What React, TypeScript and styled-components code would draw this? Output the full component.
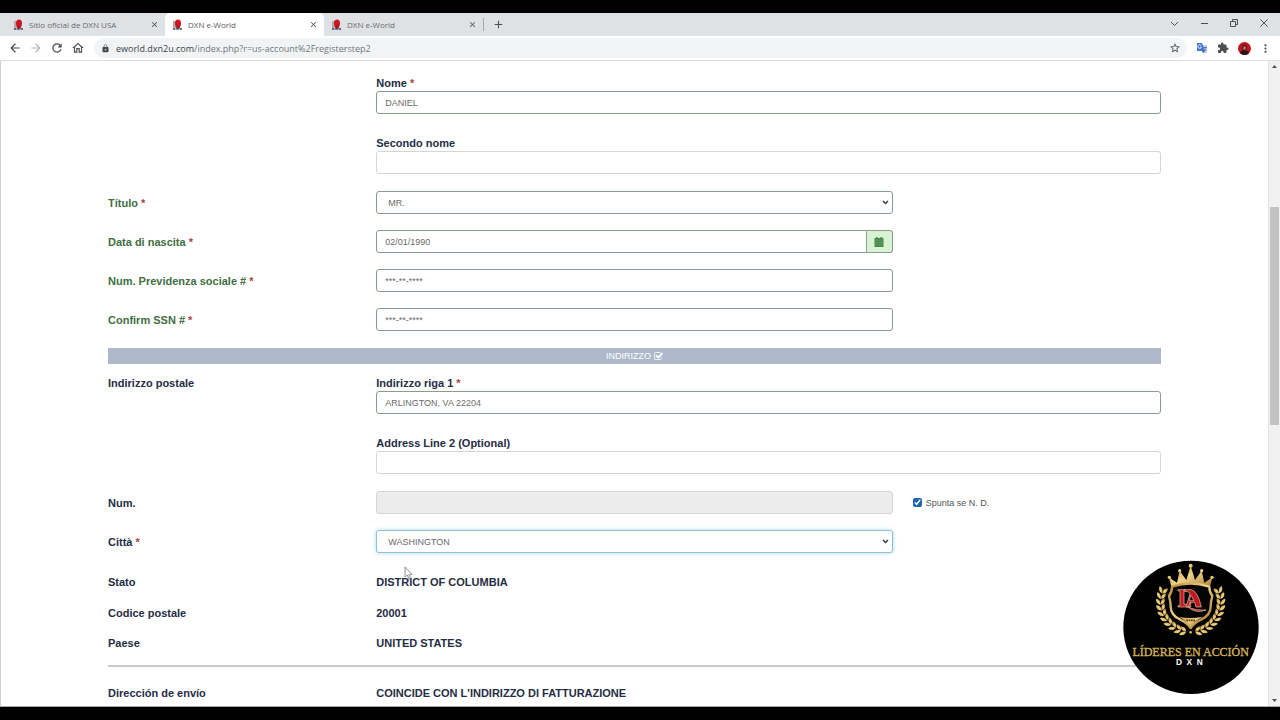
import React from "react";
import styled, { createGlobalStyle, css } from "styled-components";
import {
  MdArrowBack,
  MdArrowForward,
  MdRefresh,
  MdOutlineHome,
  MdLock,
  MdStarOutline,
  MdExtension,
  MdMoreVert,
  MdClose,
  MdAdd,
} from "react-icons/md";

const Global = createGlobalStyle`
  *, *::before, *::after { box-sizing: border-box; }
  body { margin: 0; background: #000; }
  button, input, select { font-family: inherit; }
`;

const sans = `"Liberation Sans", Arial, sans-serif`;
const chromeFont = `"Open Sans", "Noto Sans", sans-serif`;

const Screen = styled.div`
  position: relative;
  height: 100vh;
  display: flex;
  flex-direction: column;
  padding: 13px 0;
  background: #000;
  font-family: ${sans};
  overflow: hidden;
`;

/* ---------- browser chrome ---------- */

const TabStrip = styled.div`
  display: flex;
  align-items: stretch;
  flex: none;
  height: 23px;
  padding-left: 6px;
  background: #dee2e5;
  font-family: ${chromeFont};
`;

const Tab = styled.div<{ $active?: boolean }>`
  display: flex;
  align-items: center;
  gap: 5px;
  flex: 0 1 159px;
  padding: 0 6px 0 7px;
  border-radius: 5px 5px 0 0;
  color: ${(p) => (p.$active ? "#55595d" : "#666a6e")};
  background: ${(p) => (p.$active ? "#fff" : "transparent")};
  font-size: 8px;
`;

const TabTitle = styled.span`
  flex: 1;
  white-space: nowrap;
  overflow: hidden;
`;

const IconButton = styled.button<{ $size?: number; $faded?: boolean }>`
  display: flex;
  align-items: center;
  justify-content: center;
  flex: none;
  width: ${(p) => p.$size ?? 14}px;
  height: ${(p) => p.$size ?? 14}px;
  padding: 0;
  border: 0;
  background: none;
  color: ${(p) => (p.$faded ? "#b4b7ba" : "#4c5054")};
`;

const NewTab = styled.div`
  display: flex;
  align-items: center;
  margin: 5px 0;
  padding-left: 7px;
  border-left: 1px solid #a4a8ac;
`;

const WindowControls = styled.div`
  display: flex;
  align-items: center;
  gap: 16px;
  margin-left: auto;
  padding: 0 9px 3px 0;
`;

const Toolbar = styled.div`
  display: flex;
  align-items: center;
  flex: none;
  height: 25px;
  padding: 0 8px;
  border-bottom: 1px solid #dcdee0;
  background: #fff;
`;

const NavButtons = styled.div`
  display: flex;
  gap: 7px;
  margin-right: 9px;
`;

const AddressBar = styled.div`
  display: flex;
  align-items: center;
  gap: 6px;
  flex: 1;
  height: 20px;
  padding: 0 5px 0 7px;
  border-radius: 10px;
  background: #f1f4f5;
  color: #44484c;
`;

const Url = styled.span`
  flex: 1;
  font: 9px ${chromeFont};
  color: #3c4043;
  white-space: nowrap;
  em {
    font-style: normal;
    color: #73777b;
  }
`;

const Actions = styled.div`
  display: flex;
  align-items: center;
  gap: 7px;
  margin-left: 8px;
`;

/* ---------- page ---------- */

const Viewport = styled.div`
  display: flex;
  flex: 1;
  min-height: 0;
  border-left: 1px solid #cfd1d3;
  border-bottom: 1px solid #a8a8a8;
  background: #fff;
`;

const Page = styled.main`
  flex: 1;
  min-width: 0;
  overflow: hidden;
  padding: 14px 107px 0;
`;

const ScrollTrack = styled.div`
  display: flex;
  flex-direction: column;
  align-items: center;
  justify-content: space-between;
  position: relative;
  flex: none;
  width: 12px;
  padding: 4px 0;
  border-left: 1px solid #e4e4e4;
  background: #f1f1f1;
`;

const ScrollThumb = styled.div`
  position: absolute;
  top: 22.6%;
  left: 1px;
  right: 1px;
  height: 33.8%;
  background: #c3c3c3;
`;

const Row = styled.div<{ $after?: number }>`
  display: grid;
  grid-template-columns: repeat(12, minmax(0, 1fr));
  column-gap: 20px;
  align-items: center;
  margin-bottom: ${(p) => p.$after ?? 16}px;
`;

const labelText = css<{ $valid?: boolean }>`
  font-size: 11px;
  font-weight: 700;
  line-height: 16px;
  color: ${(p) => (p.$valid ? "#3f6f42" : "#252d45")};
`;

const RowLabel = styled.label<{ $valid?: boolean; $top?: boolean }>`
  ${labelText}
  grid-column: span 3;
  align-self: ${(p) => (p.$top ? "start" : "center")};
`;

const RowTitle = styled.span<{ $top?: boolean }>`
  ${labelText}
  grid-column: span 3;
  align-self: ${(p) => (p.$top ? "start" : "center")};
`;

const Value = styled.span`
  ${labelText}
  grid-column: span 9;
`;

const Star = styled.span`
  color: #a94442;
`;

const Wide = styled.div`
  grid-column: 4 / span 9;
  display: flex;
  flex-direction: column;
  gap: 21px;
`;

const Half = styled.div`
  grid-column: 4 / span 6;
  display: flex;
`;

const Field = styled.div`
  display: flex;
  flex-direction: column;
`;

const FieldLabel = styled.label`
  ${labelText}
`;

type Tone = "plain" | "valid" | "focus";
const borders: Record<Tone, string> = {
  plain: "#d4d6d4",
  valid: "#8b9c8b",
  focus: "#8fc0cf",
};

const control = css<{ $tone?: Tone }>`
  flex: 1;
  width: 100%;
  min-width: 0;
  height: 23px;
  min-height: 23px;
  border: 1px solid ${(p) => borders[p.$tone ?? "plain"]};
  border-radius: 3px;
  background-color: #fff;
  color: #6a6a6a;
  font-size: 9px;
  outline: 0;
  box-shadow: ${(p) => (p.$tone === "focus" ? "0 0 4px #a9dcea" : "none")};
`;

const TextInput = styled.input<{ $tone?: Tone; $joined?: boolean }>`
  ${control}
  padding: 0 8px;
  ${(p) => p.$joined && "border-radius: 3px 0 0 3px;"}
  &:disabled {
    background-color: #ececec;
  }
`;

const SelectWrap = styled.div`
  position: relative;
  display: flex;
  flex: 1;
  svg {
    position: absolute;
    right: 4px;
    top: 8px;
    pointer-events: none;
  }
`;

const SelectBox = styled.select<{ $tone?: Tone }>`
  ${control}
  appearance: none;
  padding: 0 16px 0 11px;
`;

const DateButton = styled.button`
  display: flex;
  align-items: center;
  justify-content: center;
  flex: none;
  width: 26px;
  height: 23px;
  padding: 0;
  border: 1px solid #8b9c8b;
  border-left: 0;
  border-radius: 0 3px 3px 0;
  background: #d8f2d4;
`;

const Band = styled.h2`
  display: flex;
  align-items: center;
  justify-content: center;
  gap: 3px;
  height: 16px;
  margin: 17px 0 11px;
  background: #adb8ca;
  color: #fff;
  font-size: 9px;
  font-weight: 400;
`;

const CheckLabel = styled.label`
  grid-column: span 3;
  display: flex;
  align-items: center;
  gap: 4px;
  font-size: 9px;
  color: #555;
  input {
    width: 9px;
    height: 9px;
    margin: 0;
    accent-color: #1a66b8;
  }
`;

const Rule = styled.hr`
  height: 2px;
  margin: 0 0 18px;
  border: 0;
  background: #c9c9c9;
`;

const Watermark = styled.div`
  position: absolute;
  right: 21px;
  bottom: 25px;
  width: 136px;
  svg {
    display: block;
    width: 100%;
  }
`;

const Pointer = styled.svg`
  position: absolute;
  left: 404px;
  top: 566px;
`;

/* ---------- drawings ---------- */

const Favicon = () => (
  <svg width="11" height="12" viewBox="0 0 11 12" aria-hidden="true">
    <path d="M1 2h3v7H1z" fill="#b9a5a5" />
    <ellipse cx="6" cy="4.5" rx="3" ry="4" fill="#cf1420" />
    <path d="M4.5 7.5h3l.5 2H4z" fill="#7b1821" />
    <path d="M1 10h2.4M4.3 10h2.4M7.6 10H10" stroke="#3d3f5c" strokeWidth="1.6" />
  </svg>
);

const Translate = () => (
  <svg width="12" height="12" viewBox="0 0 12 12" aria-hidden="true">
    <path d="M5 3h6v8H7z" fill="#cfd6e2" />
    <path d="M1 1h5l3 8H1z" fill="#3f78d8" />
    <path d="M5.2 3.6a1.8 1.8 0 1 0 .2 1.6H3.9" stroke="#fff" strokeWidth=".8" fill="none" />
    <path d="M7 5.5h4M9 4.5v1M10.3 5.5C10 7.500 8.500 8.500 7.500 9M8 6.500l2.500 2.500" stroke="#4169b0" strokeWidth=".8" fill="none" />
    <path d="M6 9h3l-2 2z" fill="#2a56a8" />
  </svg>
);

const Avatar = () => (
  <svg width="13" height="13" viewBox="0 0 13 13" aria-hidden="true">
    <circle cx="6.500" cy="6.500" r="6.500" fill="#c4121c" />
    <path d="M2 11.200q1-3.200 4.500-3.200t4.500 3.200a6.500 6.500 0 0 1-9 0z" fill="#2a1216" />
    <ellipse cx="6.500" cy="5.500" rx="2.200" ry="3" fill="#3b1a18" />
    <ellipse cx="6.500" cy="6" rx="1.400" ry="2" fill="#b5705a" />
  </svg>
);

const CalendarIcon = () => (
  <svg width="10" height="10" viewBox="0 0 10 10" aria-hidden="true">
    <path d="M.5 1H2V0h1.500v1h3V0H8v1h1.500v9H.5z" fill="#4b8a4e" />
    <path d="M.5 3.200h9M.5 5.500h9M.5 7.700h9" stroke="#74a974" strokeWidth=".5" />
  </svg>
);

const Chevron = () => (
  <svg width="7" height="7" viewBox="0 0 7 7" aria-hidden="true">
    <path d="M1 2l2.500 2.500L6 2" fill="none" stroke="#3c3c3c" strokeWidth="1.500" />
  </svg>
);

const CheckSquare = () => (
  <svg width="9" height="9" viewBox="0 0 1664 1536" fill="#fff" aria-hidden="true">
    <path d="M1408 802v318q0 119-84.500 203.500t-203.500 84.500h-832q-119 0-203.500-84.500t-84.500-203.500v-832q0-119 84.500-203.500t203.500-84.500h832q63 0 117 25 15 7 18 23 3 17-9 29l-49 49q-10 10-23 10-3 0-9-2-23-6-45-6h-832q-66 0-113 47t-47 113v832q0 66 47 113t113 47h832q66 0 113-47t47-113v-254q0-13 9-22l64-64q10-10 23-10 6 0 12 3 20 8 20 29zm231-489l-814 814q-24 24-57 24t-57-24l-430-430q-24-24-24-57t24-57l110-110q24-24 57-24t57 24l263 263 647-647q24-24 57-24t57 24l110 110q24 24 24 57t-24 57z" />
  </svg>
);

const Triangle = ({ down }: { down?: boolean }) => (
  <svg width="5" height="3" viewBox="0 0 5 3" aria-hidden="true">
    <path d={down ? "M0 0h5L2.500 3z" : "M0 3h5L2.500 0z"} fill="#505050" />
  </svg>
);

const leafAngles = [198, 187, 176, 165, 154, 143, 132, 121, 110, 100];

const Laurel = () => (
  <g fill="url(#gold)">
    {leafAngles.map((deg) => {
      const a = (deg * Math.PI) / 180;
      const x = 241 + 90 * Math.cos(a);
      const y = 156 + 90 * Math.sin(a);
      return (
        <g key={deg} transform={`translate(${x.toFixed(1)} ${y.toFixed(1)}) rotate(${deg + 90})`}>
          <path d="M-2 0q3-15 19-13-2 13-19 13z" />
          <path d="M-2 0q3 15 19 13-2-13-19-13z" />
        </g>
      );
    })}
  </g>
);

const Emblem = () => (
  <svg viewBox="38 30 408 404" role="img" aria-label="Líderes en Acción DXN">
    <defs>
      <linearGradient id="gold" x1="0" y1="0" x2="1" y2="1">
        <stop offset="0" stopColor="#b98a35" />
        <stop offset=".45" stopColor="#ecd185" />
        <stop offset="1" stopColor="#a5742a" />
      </linearGradient>
    </defs>
    <ellipse cx="242" cy="232" rx="203" ry="200" fill="#000" />
    <Laurel />
    <g transform="translate(482 0) scale(-1 1)">
      <Laurel />
    </g>
    <path
      d="M176 82l24 16 8-36 20 28 13-43 13 43 20-28 8 36 24-16-9 36q-56-22-112 0z"
      fill="url(#gold)"
    />
    <g fill="#e9c978">
      <circle cx="241" cy="47" r="6" />
      <circle cx="208" cy="62" r="5" />
      <circle cx="274" cy="62" r="5" />
      <circle cx="177" cy="82" r="5" />
      <circle cx="305" cy="82" r="5" />
    </g>
    <path
      d="M185 110q56-18 112 0 0 16 9 28-5 18-5 32 0 24-27 38-24 12-33 26-9-14-33-26-27-14-27-38 0-14-5-32 9-12 9-28z"
      fill="#050505"
      stroke="url(#gold)"
      strokeWidth="7"
      strokeLinejoin="round"
    />
    <path d="M206 200q35 8 70 0-24 14-35 30-11-16-35-30z" fill="url(#gold)" />
    <path d="M228 211h26" stroke="#50370f" strokeWidth="5" strokeDasharray="5 2" />
    <g fill="#c41624" stroke="#e8c9a0" strokeWidth="2">
      <path d="M203 119h24v4h-6v40h14l6-8v16h-38v-4h6v-44h-6z" />
      <path d="M221 119h22q20 6 30 52h-16l-4-14h-14l-4 14h-8l12-40q-4-8-18-8zM241 136l-4 16h13q-3-12-9-16z" />
      <path d="M232 170q22 12 55 10-32 12-55-10z" />
    </g>
    <circle cx="241" cy="247" r="4" fill="#d6b05c" />
    <text
      x="241"
      y="317"
      textAnchor="middle"
      fill="#d9b557"
      stroke="#d9b557"
      fontFamily="Liberation Serif, serif"
      fontSize="36"
    >
      LÍDERES EN ACCIÓN
    </text>
    <text x="237" y="345" textAnchor="middle" fill="#fff" fontFamily="Liberation Sans, sans-serif" fontWeight="700" fontSize="25" xmlSpace="preserve">
      D&#160; X&#160; N
    </text>
  </svg>
);

/* ---------- composed parts ---------- */

const BrowserTab = ({ title, active }: { title: string; active?: boolean }) => (
  <Tab $active={active}>
    <Favicon />
    <TabTitle>{title}</TabTitle>
    <IconButton $size={10} aria-label="Chiudi scheda">
      <MdClose size={9} />
    </IconButton>
  </Tab>
);

const Required = () => <Star>*</Star>;

const Dropdown = ({ id, tone, value }: { id: string; tone: Tone; value: string }) => (
  <SelectWrap>
    <SelectBox id={id} $tone={tone}>
      <option>{value}</option>
    </SelectBox>
    <Chevron />
  </SelectWrap>
);

const StackedField = ({ id, label, value, required }: { id: string; label: string; value?: string; required?: boolean }) => (
  <Field>
    <FieldLabel htmlFor={id}>
      {label} {required && <Required />}
    </FieldLabel>
    <TextInput id={id} $tone={value ? "valid" : "plain"} defaultValue={value} />
  </Field>
);

const Info = ({ title, value, after }: { title: string; value: string; after: number }) => (
  <Row $after={after}>
    <RowTitle>{title}</RowTitle>
    <Value>{value}</Value>
  </Row>
);

export default function App() {
  return (
    <Screen>
      <Global />
      <TabStrip>
        <BrowserTab title="Sitio oficial de DXN USA" />
        <BrowserTab title="DXN e-World" active />
        <BrowserTab title="DXN e-World" />
        <NewTab>
          <IconButton aria-label="Nuova scheda"><MdAdd size={13} /></IconButton>
        </NewTab>
        <WindowControls>
          <IconButton aria-label="Cerca schede">
            <svg width="9" height="9" viewBox="0 0 9 9"><path d="M1 3l3.500 3.500L8 3" fill="none" stroke="currentColor" /></svg>
          </IconButton>
          <IconButton aria-label="Riduci">
            <svg width="8" height="8" viewBox="0 0 8 8"><path d="M1 4.500h7" stroke="currentColor" /></svg>
          </IconButton>
          <IconButton aria-label="Ripristina">
            <svg width="8" height="8" viewBox="0 0 8 8"><path d="M.5 2.500h5v5h-5zM2.500 2.500v-2h5v5h-2" fill="none" stroke="currentColor" /></svg>
          </IconButton>
          <IconButton aria-label="Chiudi">
            <svg width="8" height="8" viewBox="0 0 8 8"><path d="M.5.5l7 7M7.500.5l-7 7" stroke="currentColor" /></svg>
          </IconButton>
        </WindowControls>
      </TabStrip>
      <Toolbar>
        <NavButtons>
          <IconButton aria-label="Indietro"><MdArrowBack size={14} /></IconButton>
          <IconButton $faded aria-label="Avanti"><MdArrowForward size={14} /></IconButton>
          <IconButton aria-label="Ricarica"><MdRefresh size={14} /></IconButton>
          <IconButton aria-label="Pagina iniziale"><MdOutlineHome size={14} /></IconButton>
        </NavButtons>
        <AddressBar>
          <MdLock size={9} />
          <Url>
            eworld.dxn2u.com<em>/index.php?r=us-account%2Fregisterstep2</em>
          </Url>
          <IconButton aria-label="Aggiungi ai preferiti"><MdStarOutline size={12} /></IconButton>
        </AddressBar>
        <Actions>
          <IconButton aria-label="Traduci"><Translate /></IconButton>
          <IconButton aria-label="Estensioni"><MdExtension size={12} /></IconButton>
          <IconButton aria-label="Profilo"><Avatar /></IconButton>
          <IconButton aria-label="Menu"><MdMoreVert size={13} /></IconButton>
        </Actions>
      </Toolbar>
      <Viewport>
        <Page>
          <Row $after={17}>
            <Wide>
              <StackedField id="nome" label="Nome" value="DANIEL" required />
              <StackedField id="secondo" label="Secondo nome" />
            </Wide>
          </Row>
          <Row>
            <RowLabel $valid htmlFor="titolo">Título <Required /></RowLabel>
            <Half><Dropdown id="titolo" tone="valid" value="MR." /></Half>
          </Row>
          <Row>
            <RowLabel $valid htmlFor="nascita">Data di nascita <Required /></RowLabel>
            <Half>
              <TextInput id="nascita" $tone="valid" $joined defaultValue="02/01/1990" />
              <DateButton aria-label="Apri calendario"><CalendarIcon /></DateButton>
            </Half>
          </Row>
          <Row>
            <RowLabel $valid htmlFor="ssn">Num. Previdenza sociale # <Required /></RowLabel>
            <Half><TextInput id="ssn" $tone="valid" defaultValue="***-**-****" /></Half>
          </Row>
          <Row>
            <RowLabel $valid htmlFor="ssn2">Confirm SSN # <Required /></RowLabel>
            <Half><TextInput id="ssn2" $tone="valid" defaultValue="***-**-****" /></Half>
          </Row>
          <Band>INDIRIZZO <CheckSquare /></Band>
          <Row $after={17}>
            <RowTitle $top>Indirizzo postale</RowTitle>
            <Wide>
              <StackedField id="riga1" label="Indirizzo riga 1" value="ARLINGTON, VA 22204" required />
              <StackedField id="riga2" label="Address Line 2 (Optional)" />
            </Wide>
          </Row>
          <Row>
            <RowLabel htmlFor="num">Num.</RowLabel>
            <Half><TextInput id="num" disabled /></Half>
            <CheckLabel>
              <input type="checkbox" defaultChecked />
              Spunta se N. D.
            </CheckLabel>
          </Row>
          <Row $after={21}>
            <RowLabel htmlFor="citta">Città <Required /></RowLabel>
            <Half><Dropdown id="citta" tone="focus" value="WASHINGTON" /></Half>
          </Row>
          <Info title="Stato" value="DISTRICT OF COLUMBIA" after={15} />
          <Info title="Codice postale" value="20001" after={14} />
          <Info title="Paese" value="UNITED STATES" after={14} />
          <Rule />
          <Info title="Dirección de envío" value="COINCIDE CON L'INDIRIZZO DI FATTURAZIONE" after={0} />
        </Page>
        <ScrollTrack>
          <Triangle />
          <ScrollThumb />
          <Triangle down />
        </ScrollTrack>
      </Viewport>
      <Pointer width="9" height="14" viewBox="0 0 9 14" aria-hidden="true">
        <path d="M1 1v10l2.300-2 1.600 4 1.600-.7-1.600-3.700H8z" fill="#fff" stroke="#777" strokeWidth=".8" />
      </Pointer>
      <Watermark><Emblem /></Watermark>
    </Screen>
  );
}
